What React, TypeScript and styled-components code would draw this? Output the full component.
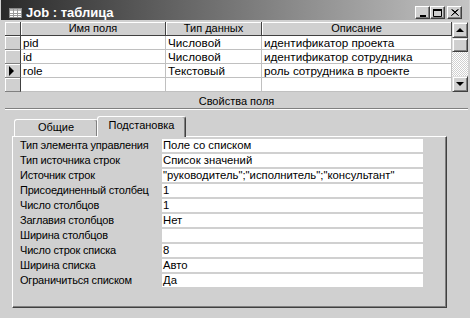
import React from "react";
import styled, { createGlobalStyle } from "styled-components";

const GlobalStyle = createGlobalStyle`
  html, body {
    margin: 0;
    padding: 0;
    background: #d0d0d0;
  }
  body {
    font-family: "Liberation Sans", Arial, sans-serif;
    font-size: 11px;
    color: #000;
  }
`;

const Window = styled.div`
  width: 470px;
  height: 318px;
  box-sizing: border-box;
  padding: 0 1px 0 1px;
  background: #d0d0d0;
  display: flex;
  flex-direction: column;
  overflow: hidden;
`;

const TitleBar = styled.div`
  height: 20px;
  box-sizing: border-box;
  padding: 5px 7px 0 8px;
  display: flex;
  align-items: center;
  background: linear-gradient(to right, #2a2a2a, #c4c4c4);
`;

const TitleText = styled.span`
  flex: 1;
  margin-left: 4px;
  color: #fff;
  font-weight: bold;
  font-size: 13px;
  white-space: nowrap;
`;

const CaptionButton = styled.div<{ $gap?: boolean }>`
  width: 15px;
  height: 13px;
  box-sizing: border-box;
  margin-left: ${({ $gap }) => ($gap ? "2px" : "0")};
  background: #d0d0d0;
  border-top: 1px solid #fff;
  border-left: 1px solid #fff;
  border-right: 1px solid #404040;
  border-bottom: 1px solid #404040;
  box-shadow: inset -1px -1px 0 #808080;
  display: flex;
  align-items: center;
  justify-content: center;
`;

const Body = styled.div`
  flex: 1;
  display: flex;
  flex-direction: column;
  padding: 0 1px 0 4px;
`;

const Sheet = styled.div`
  display: flex;
  margin-top: 2px;
  height: 70px;
`;

const Table = styled.div`
  display: grid;
  grid-template-columns: 16px 145px 96px 190px;
  grid-auto-rows: 14px;
  align-content: start;
  background: #fff;
`;

const HeaderCell = styled.div`
  box-sizing: border-box;
  background: #d0d0d0;
  border-right: 1px solid #404040;
  border-bottom: 1px solid #404040;
  box-shadow: inset 1px 1px 0 #fff;
  text-align: center;
  line-height: 13px;
  white-space: nowrap;
`;

const Selector = styled.div`
  box-sizing: border-box;
  background: #d0d0d0;
  border-right: 1px solid #404040;
  border-bottom: 1px solid #808080;
  box-shadow: inset 1px 1px 0 #fff;
  display: flex;
  align-items: center;
  padding-left: 4px;
`;

const Arrow = styled.span`
  width: 0;
  height: 0;
  border-left: 5px solid #000;
  border-top: 5px solid transparent;
  border-bottom: 5px solid transparent;
`;

const DataCell = styled.div`
  box-sizing: border-box;
  border-right: 1px solid #c0c0c0;
  border-bottom: 1px solid #c0c0c0;
  padding: 0 2px;
  font-size: 11.7px;
  line-height: 13px;
  white-space: nowrap;
  overflow: hidden;
`;

const ScrollBar = styled.div`
  width: 16px;
  display: flex;
  flex-direction: column;
`;

const ScrollButton = styled.div<{ $size: number }>`
  height: ${({ $size }) => $size}px;
  box-sizing: border-box;
  background: #d0d0d0;
  border-top: 1px solid #e0e0e0;
  border-left: 1px solid #e0e0e0;
  border-right: 1px solid #404040;
  border-bottom: 1px solid #404040;
  box-shadow: inset 1px 1px 0 #fff, inset -1px -1px 0 #808080;
  display: flex;
  align-items: center;
  justify-content: center;
`;

const Track = styled.div`
  flex: 1;
  background: repeating-conic-gradient(#fff 0 25%, #d0d0d0 0 50%) 0 0 / 2px 2px;
`;

const Tri = styled.span<{ $down?: boolean }>`
  width: 0;
  height: 0;
  border-left: 4px solid transparent;
  border-right: 4px solid transparent;
  ${({ $down }) => ($down ? "border-top: 4px solid #000;" : "border-bottom: 4px solid #000;")}
`;

const Caption = styled.div`
  margin-top: 2px;
  height: 14px;
  line-height: 14px;
  text-align: center;
`;

const Divider = styled.div`
  border-top: 1px solid #808080;
  border-bottom: 1px solid #fff;
`;

const TabArea = styled.div`
  padding: 6px 0 0 7px;
  width: 435px;
`;

const TabStrip = styled.div`
  display: flex;
  align-items: flex-end;
  height: 20px;
  padding-left: 2px;
  position: relative;
  z-index: 1;
`;

const Tab = styled.div<{ $active?: boolean }>`
  box-sizing: border-box;
  width: ${({ $active }) => ($active ? 89 : 84)}px;
  height: ${({ $active }) => ($active ? 21 : 17)}px;
  margin-left: ${({ $active }) => ($active ? "-1px" : "0")};
  margin-bottom: ${({ $active }) => ($active ? "-1px" : "0")};
  background: #d0d0d0;
  border-top: 1px solid #fff;
  border-left: 1px solid #fff;
  border-right: 1px solid #404040;
  box-shadow: inset -1px 0 0 #808080;
  border-radius: 3px 3px 0 0;
  text-align: center;
  line-height: ${({ $active }) => ($active ? 16 : 15)}px;
  position: relative;
  z-index: ${({ $active }) => ($active ? 2 : 1)};
`;

const Panel = styled.div`
  box-sizing: border-box;
  height: 172px;
  padding: 2px 0 0 7px;
  background: #d0d0d0;
  border-top: 1px solid #fff;
  border-left: 1px solid #fff;
  border-right: 1px solid #404040;
  border-bottom: 1px solid #404040;
  box-shadow: inset -1px -1px 0 #808080;
  display: grid;
  grid-template-columns: 142px 261px;
  grid-auto-rows: 13px;
  row-gap: 2px;
  align-content: start;
`;

const PropLabel = styled.div`
  line-height: 13px;
  letter-spacing: -0.2px;
  white-space: nowrap;
`;

const PropValue = styled.div`
  background: #fff;
  font-size: 11.3px;
  line-height: 13px;
  padding-left: 1px;
  white-space: nowrap;
`;

const TableIcon = () => (
  <svg width="13" height="10" viewBox="0 0 13 10">
    <rect x="0.5" y="0.5" width="12" height="9" fill="#fff" stroke="#8a8a8a" />
    <rect x="1" y="1" width="11" height="2" fill="#b8b8b8" />
    <path d="M1 5.5h11M1 7.5h11M4.5 1v8M8.5 1v8" stroke="#9a9a9a" />
  </svg>
);

const fields = [
  { name: "pid", type: "Числовой", desc: "идентификатор проекта" },
  { name: "id", type: "Числовой", desc: "идентификатор сотрудника" },
  { name: "role", type: "Текстовый", desc: "роль сотрудника в проекте", current: true },
  { name: "", type: "", desc: "" },
];

const props: [string, string][] = [
  ["Тип элемента управления", "Поле со списком"],
  ["Тип источника строк", "Список значений"],
  ["Источник строк", "\"руководитель\";\"исполнитель\";\"консультант\""],
  ["Присоединенный столбец", "1"],
  ["Число столбцов", "1"],
  ["Заглавия столбцов", "Нет"],
  ["Ширина столбцов", ""],
  ["Число строк списка", "8"],
  ["Ширина списка", "Авто"],
  ["Ограничиться списком", "Да"],
];

export default function App() {
  return (
    <>
      <GlobalStyle />
      <Window>
        <TitleBar>
          <TableIcon />
          <TitleText>Job : таблица</TitleText>
          <CaptionButton>
            <svg width="8" height="8" viewBox="0 0 8 8">
              <rect x="1" y="6" width="6" height="2" fill="#000" />
            </svg>
          </CaptionButton>
          <CaptionButton>
            <svg width="9" height="8" viewBox="0 0 9 8">
              <path d="M0.5 1.5h8v6h-8z" fill="none" stroke="#000" />
              <rect x="0" y="0" width="9" height="2" fill="#000" />
            </svg>
          </CaptionButton>
          <CaptionButton $gap>
            <svg width="8" height="7" viewBox="0 0 8 7">
              <path d="M0.5 0.5l7 6M7.5 0.5l-7 6M1.5 0.5l6 6M6.5 0.5l-6 6" stroke="#000" />
            </svg>
          </CaptionButton>
        </TitleBar>
        <Body>
          <Sheet>
            <Table>
              <HeaderCell />
              <HeaderCell>Имя поля</HeaderCell>
              <HeaderCell>Тип данных</HeaderCell>
              <HeaderCell>Описание</HeaderCell>
              {fields.map((f, i) => (
                <React.Fragment key={i}>
                  <Selector>{f.current && <Arrow />}</Selector>
                  <DataCell>{f.name}</DataCell>
                  <DataCell>{f.type}</DataCell>
                  <DataCell>{f.desc}</DataCell>
                </React.Fragment>
              ))}
            </Table>
            <ScrollBar>
              <ScrollButton $size={16}>
                <Tri />
              </ScrollButton>
              <ScrollButton $size={14} />
              <Track />
              <ScrollButton $size={16}>
                <Tri $down />
              </ScrollButton>
            </ScrollBar>
          </Sheet>
          <Caption>Свойства поля</Caption>
          <Divider />
          <TabArea>
            <TabStrip>
              <Tab>Общие</Tab>
              <Tab $active>Подстановка</Tab>
            </TabStrip>
            <Panel>
              {props.map(([label, value]) => (
                <React.Fragment key={label}>
                  <PropLabel>{label}</PropLabel>
                  <PropValue>{value}</PropValue>
                </React.Fragment>
              ))}
            </Panel>
          </TabArea>
        </Body>
      </Window>
    </>
  );
}
